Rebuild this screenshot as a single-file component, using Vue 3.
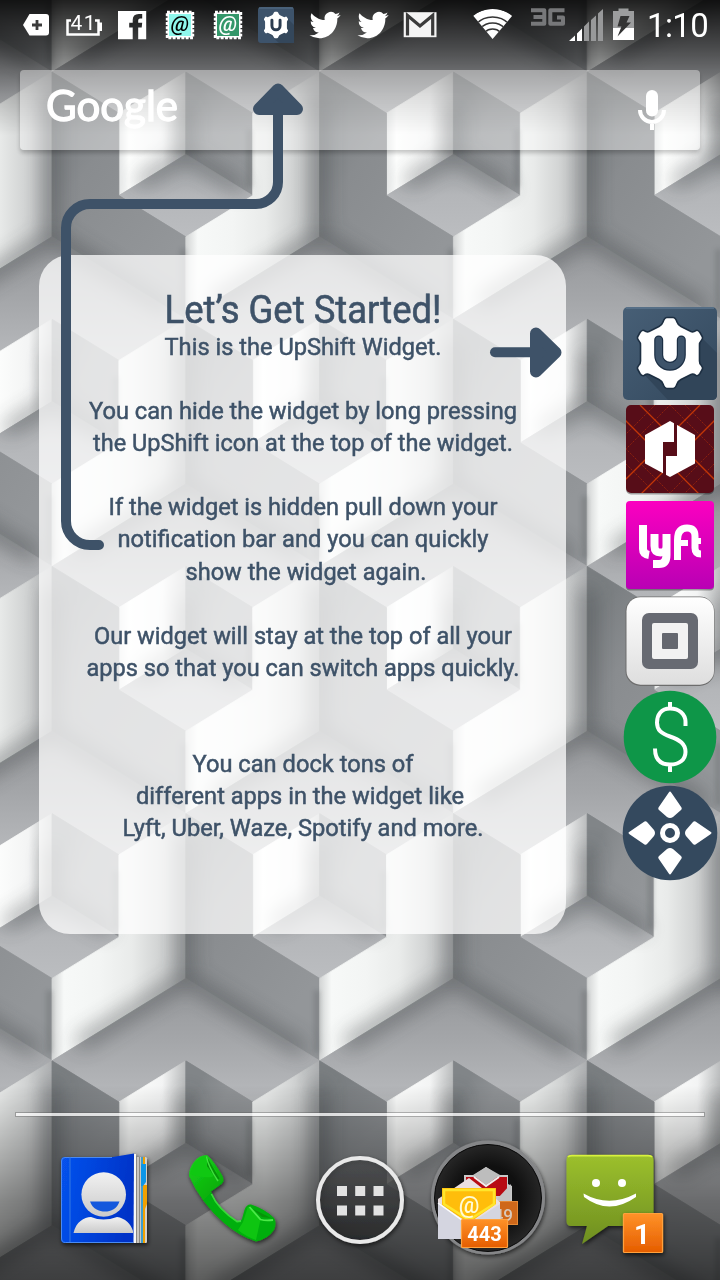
<script setup>
const A = 66.9
const B = 41.2
const pt = (list) => list.map(([x, y]) => `${x * A},${y * B}`).join(' ')
const faces = {
  light: pt([[0, 0], [-1, 1], [-1, 3], [-2, 4], [-2, 6], [0, 4]]),
  dark: pt([[0, 0], [1, 1], [1, 3], [2, 4], [2, 6], [0, 4]]),
  top: pt([[0, 4], [2, 6], [1, 7], [0, 6], [-1, 7], [-2, 6]]),
  nLight: pt([[0, 6], [0, 8], [-1, 9], [-1, 7]]),
  nDark: pt([[0, 6], [1, 7], [1, 9], [0, 8]]),
  nBase: pt([[0, 8], [1, 9], [0, 10], [-1, 9]]),
}
const cells = []
for (let r = -2; r <= 5; r++) {
  for (let c = -1; c <= 3; c++) {
    cells.push({ id: `${r}:${c}`, x: 52 + c * 4 * A + (r % 2 ? 2 * A : 0), y: 72 + r * 6 * B })
  }
}
const bird = 'M23.953 4.57a10 10 0 01-2.825.775 4.958 4.958 0 002.163-2.723c-.951.555-2.005.959-3.127 1.184a4.92 4.92 0 00-8.384 4.482C7.69 8.095 4.067 6.13 1.64 3.162a4.822 4.822 0 00-.666 2.475c0 1.71.87 3.213 2.188 4.096a4.904 4.904 0 01-2.228-.616v.06a4.923 4.923 0 003.946 4.827 4.996 4.996 0 01-2.212.085 4.936 4.936 0 004.604 3.417 9.867 9.867 0 01-6.102 2.105c-.39 0-.779-.023-1.17-.067a13.995 13.995 0 007.557 2.209c9.053 0 13.998-7.496 13.998-13.985 0-.21 0-.42-.015-.63A9.935 9.935 0 0024 4.59z'
const gear = 'M-7 -31 Q-5.500 -35.500 -3 -35.500 H3 Q5.500 -35.500 7 -31 Q8 -28 11 -26.500 L21 -21.500 Q23 -20.500 26 -22.500 Q28 -23.500 30 -20.500 L32.500 -16 Q33 -14 31 -12 Q29.500 -10.500 29.500 -8 V8 Q29.500 10.500 31 12 Q33 14 32.500 16 L30 20.500 Q28 23.500 26 22.500 Q23 20.500 21 21.500 L11 26.500 Q8 28 7 31 Q5.500 35.500 3 35.500 H-3 Q-5.500 35.500 -7 31 Q-8 28 -11 26.500 L-21 21.500 Q-23 20.500 -26 22.500 Q-28 23.500 -30 20.500 L-32.500 16 Q-33 14 -31 12 Q-29.500 10.500 -29.500 8 V-8 Q-29.500 -10.500 -31 -12 Q-33 -14 -32.500 -16 L-30 -20.500 Q-28 -23.500 -26 -22.500 Q-23 -20.500 -21 -21.500 L-11 -26.500 Q-8 -28 -7 -31Z'
const stamps = [
  { x: 166, fill: '#8ff7ec', ink: '#000' },
  { x: 214, fill: '#34976a', ink: '#fff' },
]
const paragraphs = [
  [{ t: 'You can hide the widget by long pressing', w: 428 }, { t: 'the UpShift icon at the top of the widget.', w: 420 }],
  [{ t: 'If the widget is hidden pull down your', w: 389 }, { t: 'notification bar and you can quickly', w: 371 }, { t: 'show the widget again.', w: 241, x: 267 }],
  [{ t: 'Our widget will stay at the top of all your', w: 418 }, { t: 'apps so that you can switch apps quickly.', w: 433 }],
  [{ t: 'You can dock tons of', w: 221 }, { t: 'different apps in the widget like', w: 328, x: 261 }, { t: 'Lyft, Uber, Waze, Spotify and more.', w: 361 }],
]
</script>

<template>
  <div class="phone">
    <svg class="wallpaper" width="720" height="1280" viewBox="0 0 720 1280">
      <defs>
        <linearGradient id="gLight" gradientUnits="userSpaceOnUse" x1="-134" y1="0" x2="0" y2="0">
          <stop offset="0" stop-color="#d2d4d4" /><stop offset=".09" stop-color="#f7f9f8" /><stop offset=".35" stop-color="#f3f5f4" />
          <stop offset=".6" stop-color="#e9ebea" /><stop offset=".82" stop-color="#cfd1d1" /><stop offset="1" stop-color="#aeb0b2" />
        </linearGradient>
        <linearGradient id="gDark" gradientUnits="userSpaceOnUse" x1="0" y1="60" x2="134" y2="160">
          <stop offset="0" stop-color="#7b7f82" /><stop offset=".3" stop-color="#898c8f" /><stop offset="1" stop-color="#939699" />
        </linearGradient>
        <linearGradient id="gTop" gradientUnits="userSpaceOnUse" x1="0" y1="165" x2="0" y2="288">
          <stop offset="0" stop-color="#949699" /><stop offset=".5" stop-color="#a4a6a9" /><stop offset="1" stop-color="#b8babd" />
        </linearGradient>
        <linearGradient id="gNL" gradientUnits="userSpaceOnUse" x1="-67" y1="0" x2="0" y2="0">
          <stop offset="0" stop-color="#e4e6e6" /><stop offset=".15" stop-color="#fdfefd" /><stop offset=".65" stop-color="#f3f4f4" /><stop offset="1" stop-color="#b9bbbc" />
        </linearGradient>
        <linearGradient id="gND" gradientUnits="userSpaceOnUse" x1="0" y1="300" x2="67" y2="330">
          <stop offset="0" stop-color="#818588" /><stop offset=".4" stop-color="#8f9295" /><stop offset="1" stop-color="#94979a" />
        </linearGradient>
        <linearGradient id="gNB" gradientUnits="userSpaceOnUse" x1="0" y1="330" x2="0" y2="412">
          <stop offset="0" stop-color="#9b9ea1" /><stop offset=".5" stop-color="#b4b6b9" /><stop offset="1" stop-color="#bbbdc0" />
        </linearGradient>
        <linearGradient id="shadeTop" x1="0" y1="0" x2="0" y2="1">
          <stop offset="0" stop-color="#000" stop-opacity=".87" /><stop offset=".35" stop-color="#000" stop-opacity=".55" />
          <stop offset=".7" stop-color="#000" stop-opacity=".2" /><stop offset="1" stop-color="#000" stop-opacity="0" />
        </linearGradient>
        <linearGradient id="shadeBottom" x1="0" y1="0" x2="0" y2="1">
          <stop offset="0" stop-color="#000" stop-opacity="0" /><stop offset=".6" stop-color="#000" stop-opacity=".42" /><stop offset="1" stop-color="#000" stop-opacity=".62" />
        </linearGradient>
        <filter id="soft" filterUnits="userSpaceOnUse" x="-40" y="-40" width="800" height="1360"><feGaussianBlur stdDeviation="10" /></filter>
        <g id="cube" stroke-width=".8" stroke-linejoin="round">
          <polygon :points="faces.light" fill="url(#gLight)" stroke="url(#gLight)" />
          <polygon :points="faces.dark" fill="url(#gDark)" stroke="url(#gDark)" />
          <polygon :points="faces.top" fill="url(#gTop)" stroke="url(#gTop)" />
          <polygon :points="faces.nLight" fill="url(#gNL)" stroke="url(#gNL)" />
          <polygon :points="faces.nDark" fill="url(#gND)" stroke="url(#gND)" />
          <polygon :points="faces.nBase" fill="url(#gNB)" stroke="url(#gNB)" />
        </g>
        <g id="crease" fill="none" stroke="#3f4447">
          <path :d="`M0 22V${4 * B}M${-1.6 * A} ${5.6 * B}L0 ${4 * B}L${1.75 * A} ${5.75 * B}`" stroke-width="12" />
          <path :d="`M0 ${6.8 * B}V${8 * B}M${-0.7 * A} ${8.7 * B}L0 ${8 * B}L${0.85 * A} ${8.85 * B}`" stroke-width="10" />
        </g>
        <g id="rim">
          <path :d="`M${0.95 * A} ${7.4 * B}V${8.8 * B}M${1.96 * A} ${4.3 * B}V${5.8 * B}`" stroke="#5a5e61" stroke-width="5" fill="none" />
        </g>
        <filter id="soft2" filterUnits="userSpaceOnUse" x="-40" y="-40" width="800" height="1360"><feGaussianBlur stdDeviation="2.500" /></filter>
      </defs>
      <use v-for="c in cells" :key="c.id" href="#cube" :x="c.x" :y="c.y" />
      <g filter="url(#soft)" opacity=".6"><use v-for="c in cells" :key="c.id" href="#crease" :x="c.x" :y="c.y" /></g>
      <g filter="url(#soft2)" opacity=".35"><use v-for="c in cells" :key="c.id" href="#rim" :x="c.x" :y="c.y" /></g>
      <rect width="720" height="135" fill="url(#shadeTop)" />
      <rect y="1085" width="720" height="195" fill="url(#shadeBottom)" />
    </svg>

    <header class="status">
      <svg width="48" height="50" viewBox="12 0 48 50">
        <path d="M29.500 14H46a3 3 0 0 1 3 3V32.500a3 3 0 0 1-3 3H29.500L23 25Z" fill="#fff" /><path d="M32 25H42M37 20V30" stroke="#3c3c3c" stroke-width="2.800" />
      </svg>
      <svg width="48" height="50" viewBox="60 0 48 50">
        <path d="M71 20.500H67.500V34.500H98.500V20.500H95" fill="none" stroke="#fff" stroke-width="2.500" /><rect x="99" y="22.500" width="3" height="8.500" fill="#fff" />
        <text x="70.500" y="30" class="roboto" font-size="21" textLength="25" fill="#fff">41</text>
      </svg>
      <svg width="48" height="50" viewBox="108 0 48 50">
        <path fill="#fff" fill-rule="evenodd" d="M118 11H146.200V39.200H118ZM132.700 39.200H138.200V27.500H141.700L142.200 22.800H138.200V20.300Q138.200 18.500 140 18.500H142.200V14H138.700Q132.700 14 132.700 20V22.800H129.200V27.500H132.700Z" />
      </svg>
      <svg v-for="s in stamps" :key="s.x" width="48" height="50" :viewBox="`${s.x - 10} 0 48 50`">
        <rect :x="s.x + 1.500" y="12.500" width="25" height="25" fill="#fff" />
        <rect :x="s.x + 1" y="12" width="26" height="26" fill="none" stroke="#fff" stroke-width="2.400" stroke-dasharray="2.900 1.437" />
        <rect :x="s.x + 3" y="14" width="22" height="22" :fill="s.fill" />
        <text :x="s.x + 14" y="31" class="roboto" font-size="21" font-style="italic" font-weight="500" text-anchor="middle" :fill="s.ink">@</text>
      </svg>
      <svg width="48" height="50" viewBox="252 0 48 50">
        <rect x="258" y="7" width="36" height="36" rx="3" fill="#3d536b" /><rect x="259" y="7.500" width="34" height="1" fill="#56708a" />
        <path d="M286 17L294 25V43H279L268 33Z" fill="#34475b" />
        <g transform="translate(276 25) scale(.37)">
          <path :d="gear" fill="#fff" /><path d="M-11 -13V2a11 11 0 0 0 22 0V-13" fill="none" stroke="#2b3c50" stroke-width="8" stroke-linecap="round" />
        </g>
      </svg>
      <svg width="48" height="50" viewBox="300 0 48 50"><path :d="bird" fill="#fff" transform="translate(309.500 9) scale(1.290 1.340)" /></svg>
      <svg width="48" height="50" viewBox="348 0 48 50"><path :d="bird" fill="#fff" transform="translate(357.500 9) scale(1.290 1.340)" /></svg>
      <svg width="48" height="50" viewBox="396 0 48 50">
        <rect x="403.700" y="12.200" width="32.800" height="25" fill="#f4f4f4" />
        <path d="M407.500 35.500V15.500L420 26L432.700 15.500V35.500" fill="none" stroke="#3b3b3b" stroke-width="3.200" />
      </svg>
      <svg class="signals" width="204" height="50" viewBox="444 0 204 50">
        <clipPath id="wifi"><path d="M492.600 39L473 15.500Q492.600 2 512.500 15.500Z" /></clipPath>
        <g clip-path="url(#wifi)">
          <circle cx="492.600" cy="40" r="31" fill="#fff" />
          <g fill="none" stroke="#343434" stroke-width="1.700"><circle cx="492.600" cy="40" r="11" /><circle cx="492.600" cy="40" r="17" /><circle cx="492.600" cy="40" r="23" /></g>
        </g>
        <path d="M531 10.300H544.300V23.700H531M533.500 17H544.300M564.500 10.300H550.300V23.700H563V17.500H557" fill="none" stroke="#77787a" stroke-width="4" stroke-linejoin="round" />
        <path d="M569 41L575 35.500V41Z M577 41V33.500L582 28.500V41Z" fill="#fff" />
        <path d="M584 41V26.500L589 21.500V41ZM591 41V20L596 15.500V41ZM598 41V13.500L603 9V41Z" fill="#98999a" />
        <path d="M613 11H618.500V8.500H628.500V11H634V28H613Z" fill="#9c9d9e" /><path d="M613 28H634V40H613Z" fill="#fff" />
        <path d="M620.500 16H629.500L626.500 22.500H631L617.500 36.500L621.500 26.500H617.500Z" fill="#343434" />
      </svg>
      <span class="clock">1:10</span>
    </header>

    <section class="search">
      <svg width="150" height="60" viewBox="40 80 150 60"><text x="46" y="121" class="google" font-size="43" textLength="132" lengthAdjust="spacingAndGlyphs" fill="#fff" stroke="#fff" stroke-width="1.300">Google</text></svg>
      <svg width="40" height="60" viewBox="632 80 40 60">
        <rect x="646" y="90" width="12" height="26.500" rx="6" fill="#fff" /><path d="M640 110a12 12 0 0 0 24 0M652 122V130" fill="none" stroke="#fff" stroke-width="4" />
      </svg>
    </section>

    <main class="stage">
      <article class="card">
        <svg class="lines" width="527" height="80" viewBox="39 283 527 80">
          <text x="303" y="323.400" text-anchor="middle" class="title" font-size="38.500" textLength="277" lengthAdjust="spacingAndGlyphs">Let’s Get Started!</text>
          <text x="303" y="355" text-anchor="middle" class="body" textLength="277" lengthAdjust="spacingAndGlyphs">This is the UpShift Widget.</text>
        </svg>
        <div v-for="(p, i) in paragraphs" :key="i" class="para">
          <svg v-for="l in p" :key="l.t" width="527" height="32.150">
            <text :x="l.x || 264" y="25" text-anchor="middle" class="body" :textLength="l.w" lengthAdjust="spacingAndGlyphs">{{ l.t }}</text>
          </svg>
        </div>
      </article>

      <nav class="apps">
        <svg width="100" height="97" viewBox="620 305 100 97">
          <defs><linearGradient id="nav" x2="1" y2="1"><stop stop-color="#475f76" /><stop offset="1" stop-color="#33485d" /></linearGradient></defs>
          <rect x="623" y="307" width="94" height="93" rx="5" fill="url(#nav)" /><path d="M626 308H714" stroke="#5d768e" stroke-width="1.500" />
          <path d="M700 336L717 353V395Q717 400 712 400H668L641 371Z" fill="#314559" />
          <g transform="translate(670 353)">
            <path :d="gear" fill="#fff" stroke="#1d2f42" stroke-width="1.600" />
            <path d="M-11.300 -13V2a11.300 11.300 0 0 0 22.600 0V-13" fill="none" stroke="#1b2e44" stroke-width="9" stroke-linecap="round" />
            <path d="M-11.300 -13V2a11.300 11.300 0 0 0 22.600 0V-13" fill="none" stroke="#3d536a" stroke-width="6.600" stroke-linecap="round" />
          </g>
        </svg>
        <svg width="100" height="96" viewBox="620 402 100 96">
          <clipPath id="ub"><rect x="626" y="405" width="88" height="88" rx="5" /></clipPath>
          <rect x="626" y="406.500" width="88" height="88" rx="5" fill="#000" opacity=".35" />
          <g clip-path="url(#ub)">
            <rect x="626" y="405" width="88" height="88" fill="#570d18" />
            <g fill="none" stroke="#c23607"><path d="M640 405L728 493M612 407L700 495M700 405L612 493M728 407L640 495" stroke-width="1.300" /><path d="M670 405L714 449L670 493L626 449ZM655 405L626 434M685 405L714 434M626 464L655 493M714 464L685 493" stroke-width=".8" stroke-dasharray="1.200 1.200" opacity=".8" /></g>
          </g>
          <path d="M670 421L695 435V463.500L670 477L645 463.500V435Z" fill="#fff" />
          <path d="M674 420H677V456H666V478H663V442H674Z" fill="#570d18" />
        </svg>
        <svg width="100" height="96" viewBox="620 498 100 96">
          <defs><linearGradient id="ly" x2="0" y2="1"><stop stop-color="#fb00c0" /><stop offset="1" stop-color="#b900b4" /></linearGradient></defs>
          <rect x="626" y="502.500" width="88" height="88" rx="4" fill="#000" opacity=".35" /><rect x="626" y="501" width="88" height="88" rx="4" fill="url(#ly)" />
          <g fill="none" stroke="#fff" stroke-width="8">
            <path d="M643 525V549Q643 554 649 555" />
            <path d="M654.500 534V546Q654.500 552.500 660.500 552.500T666.500 546V534M666.500 544V555Q666.500 564 659 564H653" />
            <path d="M677.500 560V540Q677.500 528 687 528Q695 528 695 536V548Q695 554 701 554" stroke-width="7" /><path d="M680 543H688M692 541H701" stroke-width="6" />
          </g>
        </svg>
        <svg width="100" height="95" viewBox="620 594 100 95">
          <defs><linearGradient id="sq" x2="0" y2="1"><stop stop-color="#fff" /><stop offset="1" stop-color="#dedede" /></linearGradient></defs>
          <rect x="625.500" y="596.500" width="89" height="89.500" rx="15" fill="#6d6d6d" /><rect x="626.500" y="597.200" width="87.500" height="87.500" rx="14" fill="url(#sq)" />
          <rect x="642" y="613" width="56" height="56" rx="7" fill="#676a72" /><rect x="652" y="623" width="36" height="36" rx="2" fill="#f2f2f2" /><rect x="662" y="633" width="16" height="16" rx="1" fill="#64676f" />
        </svg>
        <svg width="100" height="95" viewBox="620 689 100 95">
          <circle cx="670" cy="737" r="46.300" fill="#0e9648" />
          <path d="M685.500 726V722C685.500 714 679 708.500 670 708.500S657 715 657 722.500C657 730 661 733.500 670 736.500C680 740 685.500 744 685.500 752C685.500 760 679 764.500 670 764.500C660 764.500 655 759 655 748.500M670 702V710M670 764V772" fill="none" stroke="#fff" stroke-width="4" />
        </svg>
        <svg width="100" height="98" viewBox="620 784 100 98">
          <circle cx="670" cy="833" r="47.300" fill="#34495e" /><circle cx="670" cy="833" r="7.500" fill="none" stroke="#fff" stroke-width="5" />
          <g fill="#fff"><path v-for="a in [0, 90, 180, 270]" :key="a" :transform="`rotate(${a} 670 833)`" d="M668.800 792.500Q670 790.500 671.200 792.500L681.500 807.500Q682.300 809 681 810L673 817Q670 819 667 817L659 810Q657.700 809 658.500 807.500Z" /></g>
        </svg>
      </nav>
    </main>

    <div class="divider"></div>

    <footer class="dock">
      <svg width="128" height="160" viewBox="40 1120 128 160">
        <defs>
          <linearGradient id="bk" x2="1" y2=".2"><stop stop-color="#0753ee" /><stop offset="1" stop-color="#0033c8" /></linearGradient>
          <linearGradient id="gr" x2="0" y2="1"><stop stop-color="#f1f1f1" /><stop offset="1" stop-color="#cacaca" /></linearGradient>
          <filter id="sh" x="-20%" y="-20%" width="140%" height="140%"><feDropShadow dx="1" dy="2" stdDeviation="2" flood-opacity=".65" /></filter>
        </defs>
        <g filter="url(#sh)">
          <rect x="134" y="1157" width="13" height="86" rx="1.500" fill="#d2cfc8" />
          <path d="M136.500 1157V1243M139.500 1157V1243" stroke="#8a8883" stroke-width="1.200" />
          <path d="M141 1157H143V1243H141Z" fill="#3b9dcf" /><path d="M143 1157H145V1164H143ZM143 1185H147V1204L145 1209V1243H143Z" fill="#f0a000" /><path d="M141 1164H146V1182L143 1186H141Z" fill="#0a96e6" />
          <path d="M65 1157H113L134 1153.500V1243H65Q61 1243 61 1239V1161Q61 1157 65 1157Z" fill="url(#bk)" />
          <path d="M134 1154H136V1243H133.500Z" fill="#f8f8f6" />
        </g>
        <path d="M61.500 1161V1238Q61.500 1242.500 65.500 1242.500H133M61.500 1161Q61.500 1157.500 65 1157.500H112" fill="none" stroke="#4a8af2" /><path d="M70 1157.500V1242" stroke="#2b70e0" stroke-width="1.300" />
        <circle cx="103.700" cy="1194.500" r="22.300" fill="url(#gr)" /><path d="M90 1201.500H119.500C117 1209 111 1211.500 105 1211.500S92.500 1209 90 1201.500Z" fill="#1358dd" />
        <path d="M73.500 1233C76 1222 84 1217 91 1217Q103 1222 117 1217C125 1218 131 1224 133 1231V1233Z" fill="url(#gr)" />
      </svg>
      <svg width="128" height="160" viewBox="168 1120 128 160">
        <defs><linearGradient id="ph" x2="1" y2="1"><stop stop-color="#1fd420" /><stop offset=".35" stop-color="#06b008" /><stop offset="1" stop-color="#05ae07" /></linearGradient></defs>
        <path d="M194 1162Q199 1155 207 1155Q214 1161 222.500 1176Q225 1182 221.500 1184L211 1191.500Q217 1208 236 1220.500Q240.500 1223 242 1219L244.500 1210Q246.500 1204 251 1204.500Q265 1209 274 1218Q277 1223 274 1230Q268 1239 256 1241.500Q239 1236 224 1223Q201 1203 189 1176Q189 1168 194 1162Z" fill="url(#ph)" filter="url(#sh)" />
        <path d="M194 1163Q199 1157 206 1156L217 1172L212 1177Q200 1178 190 1174Z" fill="#10c812" /><path d="M207 1157L219.500 1178.500L217 1180L207 1166Z" fill="#079209" />
        <path d="M206.500 1156.500Q208 1166 218 1181" fill="none" stroke="#3fe03d" stroke-width="1.500" />
        <path d="M211.500 1194Q218 1209 237 1221.500L241 1221" fill="none" stroke="#45e543" stroke-width="1.800" opacity=".8" />
        <path d="M248 1206.500L260.500 1219.500L256 1240Q245 1236 238 1230L243 1222Z" fill="#12ca13" opacity=".8" /><path d="M249.500 1207L260.500 1219.500Q266 1221 273 1220" fill="none" stroke="#4bea48" stroke-width="1.800" /><path d="M253 1209L271 1218L262 1217Z" fill="#079209" />
      </svg>
      <svg width="128" height="160" viewBox="296 1120 128 160">
        <defs><linearGradient id="ap" x2="0" y2="1"><stop stop-color="#4b4c4e" stop-opacity=".5" /><stop offset="1" stop-color="#242526" stop-opacity=".5" /></linearGradient></defs>
        <circle cx="360" cy="1200" r="42" fill="url(#ap)" stroke="#e9e9e9" stroke-width="4" filter="url(#sh)" />
        <path v-for="x in [337, 355.200, 373.500]" :key="x" :d="`M${x} 1186h10v10h-10zM${x} 1205.500h10v10h-10z`" fill="#e2e2e2" />
      </svg>
      <svg width="128" height="160" viewBox="424 1120 128 160">
        <defs><radialGradient id="fo"><stop offset=".6" stop-color="#101010" /><stop offset="1" stop-color="#262626" /></radialGradient>
          <linearGradient id="or" x2="0" y2="1"><stop stop-color="#ff9228" /><stop offset="1" stop-color="#e55d00" /></linearGradient></defs>
        <circle cx="488" cy="1197.500" r="57" fill="#858688" filter="url(#sh)" /><circle cx="488" cy="1198" r="53.500" fill="url(#fo)" stroke="#090909" />
        <path d="M464 1175H474L486 1167L498 1175H508V1184L512 1186V1205H464Z" fill="#c9c9c9" /><path d="M466 1177H507V1196H466Z" fill="#b80b13" /><path d="M473 1175L486 1185L500 1175L486 1167Z" fill="#bdbdbd" /><path d="M474 1177L486 1186L499 1177" fill="none" stroke="#efefef" stroke-width="2" /><path d="M498 1198L511 1184V1210H498Z" fill="#c4c4c5" />
        <rect x="485" y="1201.500" width="32.500" height="23" fill="#cf681a" stroke="#e48936" /><text x="513" y="1220.500" text-anchor="end" class="roboto" font-size="17" font-weight="500" fill="#d8c9bb">49</text>
        <path d="M438 1199L469 1178L500 1202V1239H438Z" fill="#eadfe0" /><path d="M442 1188H496V1204L469 1223L442 1206Z" fill="#ffbd0b" /><path d="M444 1190H494V1204L469 1220L444 1204Z" fill="none" stroke="#ffe52c" stroke-width="2.500" />
        <text x="469" y="1213" text-anchor="middle" class="roboto" font-size="23" font-weight="500" fill="#fffbd8">@</text>
        <path d="M438 1202L469 1224L500 1204V1239H438Z" fill="#d4d5e0" /><path d="M438 1203L466 1223" stroke="#fff" stroke-width="1.500" />
        <rect x="461.500" y="1219.500" width="46" height="28" rx="1" fill="url(#or)" stroke="#ffa13e" stroke-width="1.200" /><text x="484.500" y="1241" text-anchor="middle" class="roboto" font-size="20" font-weight="700" fill="#fff">443</text>
      </svg>
      <svg width="128" height="160" viewBox="552 1120 128 160">
        <defs><linearGradient id="ms" x2="0" y2="1"><stop stop-color="#9cc02d" /><stop offset="1" stop-color="#6e8e20" /></linearGradient></defs>
        <path d="M571 1155H649Q653.500 1155 653.500 1160V1221Q653.500 1226 649 1226H608L582 1244L587 1226H571Q566.500 1226 566.500 1221V1160Q566.500 1155 571 1155Z" fill="url(#ms)" filter="url(#sh)" />
        <path d="M568 1157Q569 1155.700 572 1155.700H648Q651 1155.700 652 1157" fill="none" stroke="#d8f23e" stroke-width="1.800" />
        <circle cx="596" cy="1183" r="4" fill="#fff" /><circle cx="622" cy="1183" r="4" fill="#fff" /><path d="M583.500 1193.500Q609 1208 636 1193.500V1197Q609 1216 584 1197Z" fill="#fff" />
        <rect x="623.500" y="1213.500" width="39" height="39" rx="1" fill="url(#or)" stroke="#ffa13e" stroke-width="1.200" filter="url(#sh)" /><text x="642" y="1243.500" text-anchor="middle" class="roboto" font-size="28" font-weight="700" fill="#fff">1</text>
      </svg>
    </footer>

    <svg class="guides" width="720" height="600" viewBox="0 0 720 600">
      <g fill="none" stroke="#3e5268" stroke-width="10" stroke-linecap="round">
        <path d="M99 545H90A24 24 0 0 1 66 521V228A24 24 0 0 1 90 204H256A22 22 0 0 0 278 182V110" /><path d="M495 352.300H535" />
      </g>
      <g fill="#3e5268" stroke="#3e5268" stroke-width="12" stroke-linejoin="round"><path d="M278 89.500L259 109H297Z" /><path d="M555.500 352.500L536 333.500V371.500Z" /></g>
    </svg>
  </div>
</template>

<style>
body { margin: 0; overflow: hidden; }
</style>
<style scoped>
.phone { position: relative; width: 720px; height: 1280px; overflow: hidden; display: flex; flex-direction: column; font-family: Roboto, "Liberation Sans", sans-serif; background: #888; }
svg { display: block; flex: none; }
.wallpaper, .guides { position: absolute; left: 0; top: 0; }
.guides { pointer-events: none; }
.status { position: relative; display: flex; height: 50px; padding-left: 12px; color: #fff; }
.clock { font-size: 33px; line-height: 52px; letter-spacing: -.6px; margin-left: -1px; }
.search { position: relative; display: flex; justify-content: space-between; box-sizing: border-box; width: 680px; height: 80px; margin: 20px 20px 0; padding: 10px 28px 10px 20px; border-radius: 4px; background: rgba(255, 255, 255, .4); box-shadow: 0 3px 4px rgba(0, 0, 0, .22); }
.stage { position: relative; display: flex; justify-content: space-between; height: 807px; }
.card { box-sizing: border-box; width: 527px; height: 679px; margin: 105px 0 0 39px; padding-top: 28px; border-radius: 31px; background: rgba(255, 255, 255, .75); }
.para { margin-bottom: 32px; }
.lines + .para { margin-top: 31px; }
.para:last-child { margin-top: 64px; }
.title, .body { font-family: Roboto, sans-serif; font-weight: 400; fill: #3e5268; stroke: #3e5268; stroke-width: .5px; }
.title { stroke-width: .6px; }
.body { font-size: 24.500px; }
.roboto { font-family: Roboto, sans-serif; }
.google { font-family: Lato, sans-serif; font-weight: 400; }
.apps { width: 100px; margin-top: 155px; }
.divider { position: relative; width: 688px; height: 3px; margin: 156px auto 0; background: rgba(255, 255, 255, .78); box-shadow: 0 0 0 1px rgba(90, 90, 90, .4); }
.dock { position: relative; display: flex; height: 160px; padding-left: 40px; margin-top: 4px; }
</style>
